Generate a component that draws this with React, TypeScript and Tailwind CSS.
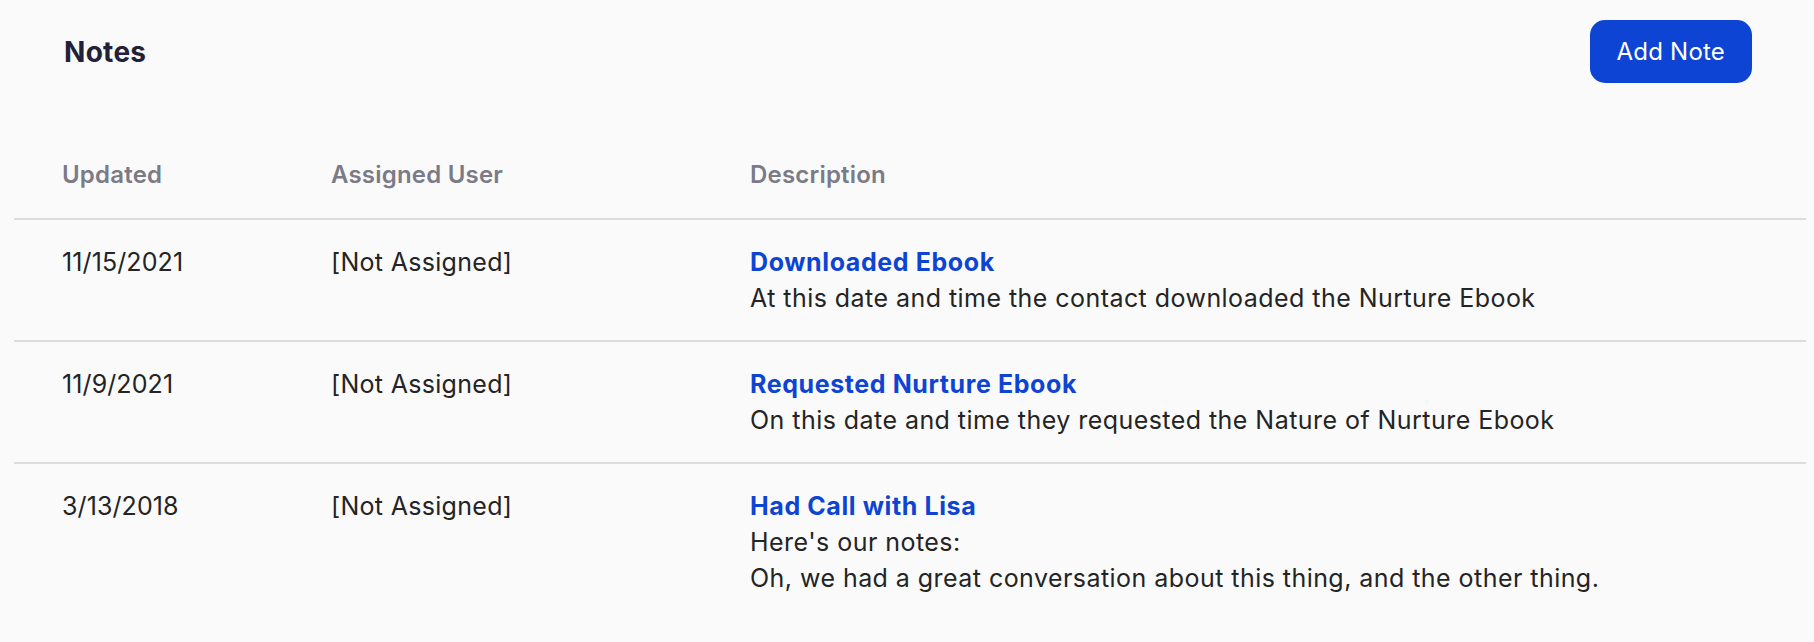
import React from 'react';

interface Note {
  id: number;
  updated: string;
  user: string;
  title: string;
  lines: string[];
}

const notes: Note[] = [
  {
    id: 1,
    updated: '11/15/2021',
    user: '[Not Assigned]',
    title: 'Downloaded Ebook',
    lines: ['At this date and time the contact downloaded the Nurture Ebook'],
  },
  {
    id: 2,
    updated: '11/9/2021',
    user: '[Not Assigned]',
    title: 'Requested Nurture Ebook',
    lines: ['On this date and time they requested the Nature of Nurture Ebook'],
  },
  {
    id: 3,
    updated: '3/13/2018',
    user: '[Not Assigned]',
    title: 'Had Call with Lisa',
    lines: ["Here's our notes:", 'Oh, we had a great conversation about this thing, and the other thing.'],
  },
];

const App = () => {
  return (
    <div className="min-h-screen bg-[#fafafa] font-['Inter',sans-serif] text-[#242424]">
      <div className="flex items-center justify-between pl-16 pr-[62px] pt-5">
        <h2 className="text-[28px] font-bold tracking-[0.3px] text-[#22213a]">Notes</h2>
        <button className="h-[63px] px-[27px] rounded-[15px] bg-[#0e44d3] text-white text-[24px] tracking-[0.2px]">
          Add Note
        </button>
      </div>

      <div className="ml-[14px] mr-2 mt-[74px]">
        {/* Table header */}
        <div className="grid grid-cols-[269px_419px_1fr] pl-12 pb-[25px] border-b-2 border-[#dcdcdc] text-[24px] leading-9 font-semibold tracking-[0.2px] text-[#7b7a86]">
          <div>Updated</div>
          <div>Assigned User</div>
          <div>Description</div>
        </div>

        {/* Rows */}
        {notes.map((note, i) => (
          <div
            key={note.id}
            className={`grid grid-cols-[269px_419px_1fr] pl-12 py-6 text-[25px] leading-9 ${
              i < notes.length - 1 ? 'border-b-2 border-[#dcdcdc]' : ''
            }`}
          >
            <div className="tracking-[0.1px]">{note.updated}</div>
            <div className="tracking-[0.3px]">{note.user}</div>
            <div className="tracking-[0.45px]">
              <div className="font-bold tracking-[0.6px] text-[#0e44d3]">{note.title}</div>
              {note.lines.map((line, j) => (
                <div key={j}>{line}</div>
              ))}
            </div>
          </div>
        ))}
      </div>
    </div>
  );
};

export default App;
